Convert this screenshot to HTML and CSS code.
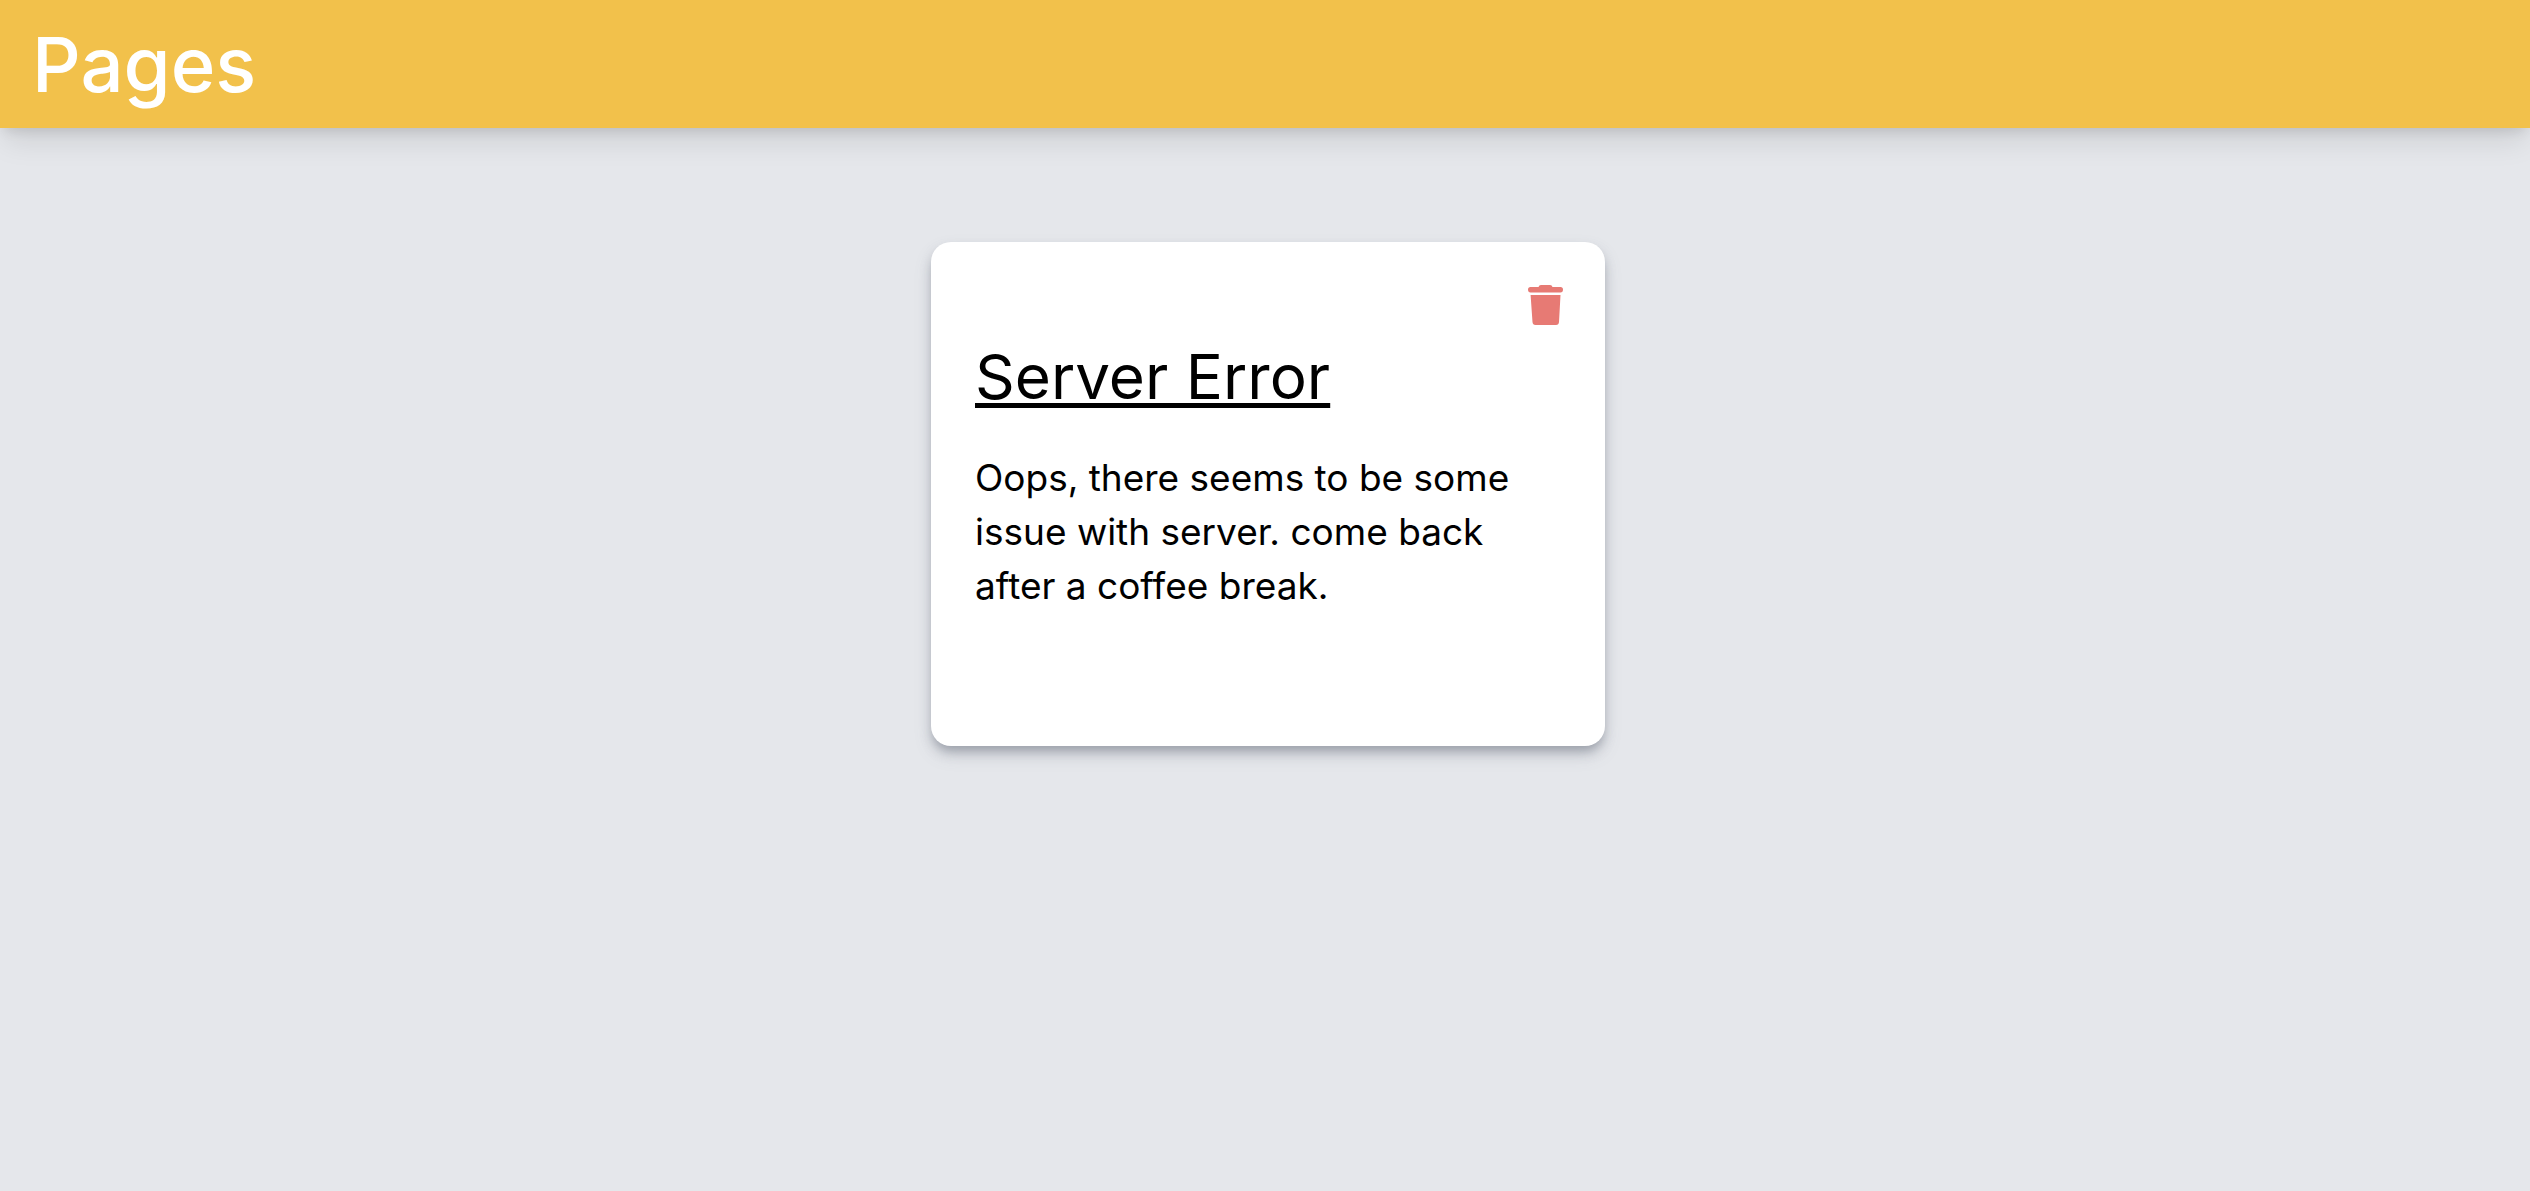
FILE: index.html
```html
<!DOCTYPE html>
<html lang="en">
<head>
  <meta charset="utf-8">
  <meta name="viewport" content="width=device-width, initial-scale=1">
  <title>Pages</title>
  <link rel="stylesheet" href="styles.css">
</head>
<body>
  <header class="topbar">
    <h1 class="brand">Pages</h1>
  </header>
  <main class="notes">
    <article class="card">
      <button class="delete" type="button" aria-label="Delete note">
        <svg class="delete-icon" viewBox="0 0 35 40" aria-hidden="true">
          <path d="M2.500 2H10.500Q11 0 13 0H22Q24 0 24.500 2H32.500Q35 2 35 4.600Q35 7.500 32.500 7.500H2.500Q0 7.500 0 4.600Q0 2 2.500 2Z"/>
          <path d="M2.600 10H32.500L31 37Q30.800 40 28 40H7.500Q4.700 40 4.500 37Z"/>
        </svg>
      </button>
      <h2 class="card-title">Server Error</h2>
      <p class="card-text">Oops, there seems to be some issue with server. come back after a coffee break.</p>
    </article>
  </main>
</body>
</html>
```
FILE: styles.css
```css
* {
  box-sizing: border-box;
}

body {
  margin: 0;
  min-height: 100vh;
  background: #e5e7eb;
  color: #000;
  font-family: Inter, "Open Sans", sans-serif;
}

.topbar {
  display: flex;
  align-items: center;
  height: 128px;
  padding: 0 32px;
  background: #f2c14b;
  box-shadow: 0 18px 27px -5px rgba(0, 0, 0, 0.1), 0 7px 11px -4px rgba(0, 0, 0, 0.1);
}

.brand {
  margin: 0;
  color: #fff;
  font-size: 76px;
  font-weight: 500;
  line-height: 96px;
}

.notes {
  display: flex;
  justify-content: center;
  padding: 114px 0 48px 6px;
}

.card {
  display: flex;
  flex-direction: column;
  width: 674px;
  max-width: 100%;
  min-height: 504px;
  padding: 43px 42px 43px 44px;
  border-radius: 20px;
  background: #fff;
  box-shadow: 0 7px 11px -2px rgba(107, 114, 128, 0.5), 0 9px 18px -2px rgba(107, 114, 128, 0.25);
}

.delete {
  align-self: flex-end;
  height: 40px;
  margin: 0;
  padding: 0;
  border: 0;
  background: none;
  cursor: pointer;
}

.delete-icon {
  display: block;
  width: 35px;
  height: 40px;
  fill: #e77a74;
}

.card-title {
  margin: 16px 0 38px;
  font-size: 62px;
  font-weight: 400;
  line-height: 72px;
  text-decoration: underline;
  text-decoration-thickness: 5px;
  text-underline-offset: 4px;
  text-decoration-skip-ink: none;
}

.card-text {
  margin: 0;
  font-size: 37px;
  line-height: 54px;
}
```
